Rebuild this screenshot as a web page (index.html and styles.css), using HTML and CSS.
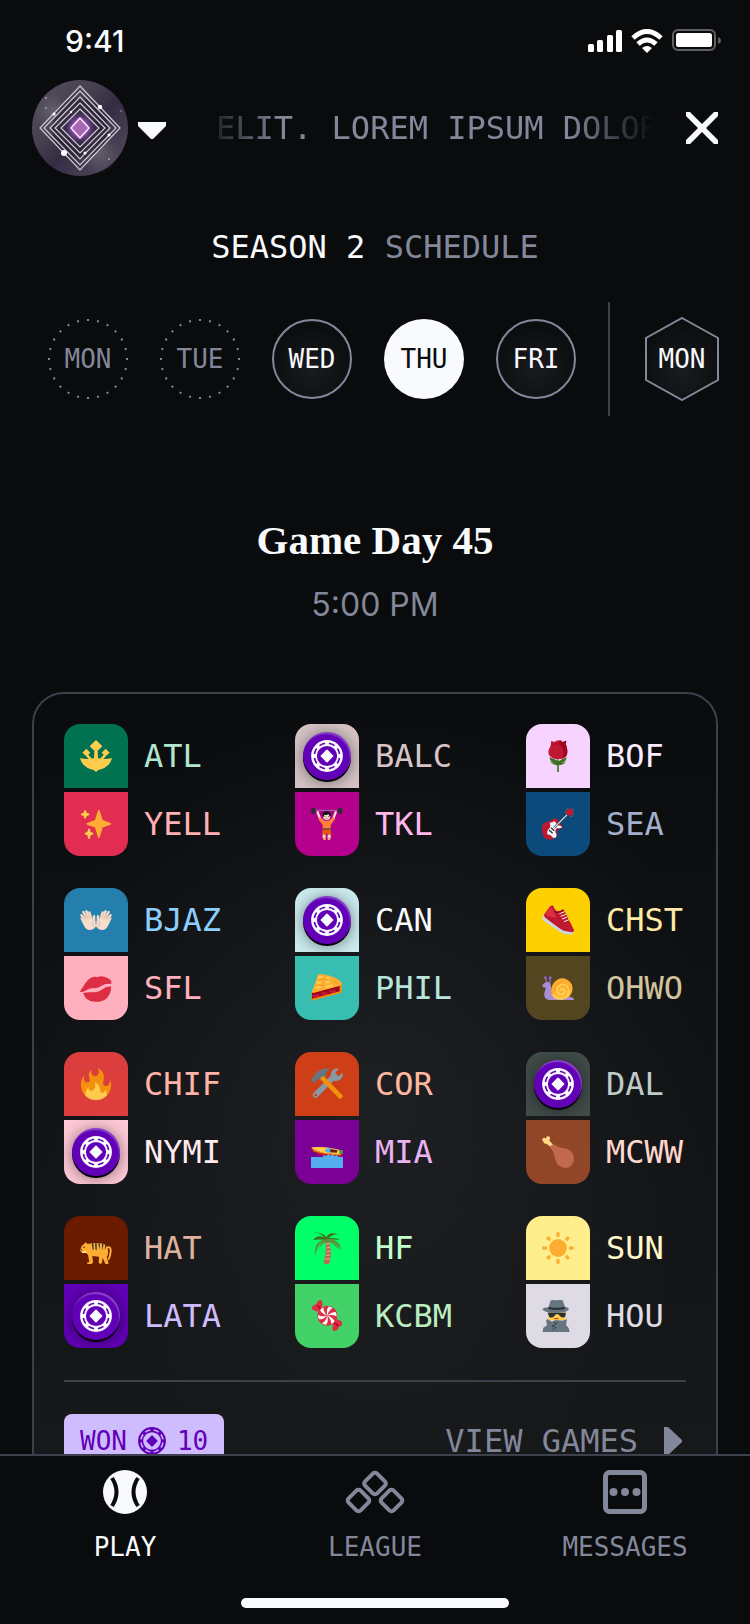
FILE: index.html
```html
<!DOCTYPE html>
<html lang="en">
<head>
<meta charset="utf-8">
<meta name="viewport" content="width=device-width, initial-scale=1">
<title>Season 2 Schedule</title>
<link rel="stylesheet" href="styles.css">
</head>
<body>
<svg class="sprite" aria-hidden="true">
  <defs>
    <symbol id="chip" viewBox="0 0 32 32">
      <g fill="none" stroke="currentColor">
        <circle cx="16" cy="16" r="14.7" stroke-width="2.4"/>
        <circle cx="16" cy="16" r="12.6" stroke-width="3" pathLength="80" stroke-dasharray="4 6" stroke-dashoffset="2"/>
        <circle cx="16" cy="16" r="11" stroke-width="1.8"/>
      </g>
      <path d="M16 10.4 21.6 16 16 21.6 10.4 16z" fill="currentColor" stroke="currentColor" stroke-width="1.6" stroke-linejoin="round"/>
    </symbol>
    <symbol id="trident" viewBox="0 0 96 96">
      <g fill="#ffcc4d">
        <path d="M48 0 67 19 53 32 54 56H42L43 32 29 19z"/>
        <path d="M19 26 31 38 25 44 37 58 31 62 18 48 7 38z"/>
        <path d="M77 26 65 38 71 44 59 58 65 62 78 48 89 38z"/>
        <path d="M0 54Q12 57 25 57 34 57 41 55H55Q62 57 71 57 84 57 96 54 91 75 73 84 62 89 55 90L48 96 41 90Q33 89 23 84 5 75 0 54z"/>
      </g>
    </symbol>
    <symbol id="sparkles" viewBox="0 0 36 36">
      <path fill="#ffac33" d="M34.347 16.893l-8.899-3.294-3.323-10.891c-.128-.42-.517-.708-.956-.708-.439 0-.828.288-.956.708l-3.322 10.891-8.9 3.294c-.393.146-.653.519-.653.938 0 .418.26.793.653.938l8.895 3.293 3.324 11.223c.126.424.516.715.959.715.442 0 .833-.291.959-.716l3.324-11.223 8.896-3.293c.391-.144.652-.518.652-.937 0-.418-.261-.792-.653-.938z"/>
      <path fill="#ffcc4d" d="M14.347 27.894l-2.314-.856-.9-3.3c-.118-.436-.513-.738-.964-.738-.451 0-.846.302-.965.737l-.9 3.3-2.313.856c-.393.146-.653.52-.653.938 0 .418.26.793.653.938l2.301.853.907 3.622c.112.444.511.756.97.756.459 0 .858-.312.97-.757l.907-3.622 2.301-.853c.393-.144.653-.519.653-.937 0-.418-.26-.793-.653-.937zM10.009 6.231l-2.364-.875-.876-2.365c-.145-.393-.519-.653-.938-.653-.418 0-.792.26-.938.653l-.875 2.365-2.365.875c-.393.146-.653.52-.653.938 0 .418.26.793.653.938l2.365.875.875 2.365c.146.393.52.653.938.653.418 0 .792-.26.938-.653l.875-2.365 2.365-.875c.393-.146.653-.52.653-.938 0-.418-.26-.792-.653-.938z"/>
    </symbol>
    <symbol id="lifter" viewBox="0 0 96 96">
      <path d="M10 7H86" stroke="#99aab5" stroke-width="2"/>
      <g fill="#292f33"><path d="M2 0H12V18H2zM82 0H92V18H82z"/><path d="M0 5H15V11H0zM79 5H95V11H79z"/></g>
      <path d="M19 10 27 32 39 43M75 10 67 32 55 43" fill="none" stroke="#f7dece" stroke-width="7"/>
      <path d="M27 27 38 38H56L67 27 72 33 59 51V65H35V51L22 33z" fill="#ff8136"/>
      <path d="M35 64H59L61 81H50L47 73 44 81H33z" fill="#e35b0c"/>
      <path d="M35 61H59V65H35z" fill="#66453c"/>
      <path d="M35 80H44V90H35zM50 80H59V90H50z" fill="#f7dece"/>
      <path d="M34 87H44V96H38zM50 87H60L57 96H50z" fill="#ffac7a"/>
      <circle cx="47" cy="25" r="11" fill="#f7dece"/>
      <path d="M34 24Q33 10 47 9 61 10 60 24L56 26 53 19Q44 23 40 20L38 27z" fill="#141517"/>
      <path d="M42 24V28M52 24V28" stroke="#662113" stroke-width="2"/>
      <path d="M43 32H51" stroke="#c1694f" stroke-width="2"/>
    </symbol>
    <symbol id="rose" viewBox="0 0 96 96">
      <path d="M48 60V95" stroke="#3e721d" stroke-width="5" stroke-linecap="round"/>
      <path d="M22 52Q40 57 48 65 58 57 75 52 70 68 57 70 70 67 72 62 67 76 48 76 30 75 24 63 31 69 40 70 25 67 22 52z" fill="#3e721d"/>
      <path d="M27 3Q34 4 37 6 44-1 55 1L61 6Q66 4 73 2 70 10 74 21 80 43 70 51 60 58 47 58 29 57 21 44 16 32 24 22 28 13 27 3z" fill="#be1931"/>
      <path d="M55 1 61 6Q66 4 73 2 70 10 74 21 80 43 70 51 63 56 56 57 67 48 65 33 61 17 50 12 53 6 55 1z" fill="#a0041e"/>
      <path d="M29 18Q39 8 50 12 63 20 65 34" fill="none" stroke="#a0041e" stroke-width="2"/>
    </symbol>
    <symbol id="guitar" viewBox="0 0 96 96">
      <path d="M73 5 79 1M90 2 95 6M84 25 92 24M70 11V15M94 16 95 20" stroke="#66757f" stroke-width="3"/>
      <path d="M76 4 86 1 94 10 92 20 84 24 73 19 71 10z" fill="#be1931"/>
      <path d="M2 50Q12 40 26 40 30 29 43 32 50 34 50 45 58 48 62 57 58 65 49 64 42 65 46 78 45 91 27 95 12 95 5 86-4 65 2 50z" fill="#be1931"/>
      <path d="M23 44Q33 44 37 39 44 45 45 52 54 51 61 57 53 62 47 60 40 61 40 72 46 80 42 88 35 92 30 86 24 78 17 80 13 71 20 63 28 58 23 44z" fill="#f5f8fa"/>
      <path d="M36 60 75 20" stroke="#292f33" stroke-width="7"/>
      <path d="M36 60 75 20" stroke="#ccd6dd" stroke-width="4"/>
      <path d="M27 59 37 68M21 66 32 76" stroke="#292f33" stroke-width="4"/>
    </symbol>
    <symbol id="hands" viewBox="0 0 96 96">
      <g id="hand">
        <path d="M20 52 4 34M24 48 10 24M30 47 19 22M35 48 28 25" stroke="#f7dece" stroke-width="7" stroke-linecap="round"/>
        <path d="M1 43Q3 37 10 44L22 52 35 43 38 50Q37 35 41 32 47 32 46 47L48 67Q42 78 29 78 17 77 12 65z" fill="#f7dece"/>
        <path d="M8 28 20 47M15 24 25 46M24 26 31 45M6 39 16 50M42 70Q34 59 38 50" fill="none" stroke="#e0aa94" stroke-width="2"/>
      </g>
      <use href="#hand" transform="matrix(-1 0 0 1 96 0)"/>
    </symbol>
    <symbol id="lips" viewBox="0 0 96 96">
      <g fill="#dd2e44">
        <path d="M0 59Q4 50 10 43 25 18 39 15 47 13 52 16 62 10 72 14 88 18 94 27V36Q75 34 64 42 55 50 40 48 25 50 15 57 6 61 0 59z"/>
        <path d="M9 63Q22 60 34 61 54 61 65 53 76 44 93 43 95 64 79 80 65 91 42 89 18 88 9 63z"/>
      </g>
    </symbol>
    <symbol id="pie" viewBox="0 0 96 96">
      <path d="M2 59 92 32V62L2 86z" fill="#f4900c"/>
      <path d="M3 62 86 41V58L3 80z" fill="#a0041e"/>
      <path d="M2 60Q13 32 21 8 25 4 35 7 76 13 91 31 95 38 84 42L7 63z" fill="#ffac33"/>
      <path d="M22 16 35 14M45 17 57 18M17 33 31 30M43 31 67 28M14 48 30 44M43 46 66 40" stroke="#ffcc4d" stroke-width="7"/>
      <path d="M26 22H45M54 27 76 31M23 40 41 41" stroke="#f4900c" stroke-width="2"/>
      <path d="M8 72H22M34 65H46M59 58H71" stroke="#dd2e44" stroke-width="9" stroke-linecap="round" opacity=".55"/>
    </symbol>
    <symbol id="shoe" viewBox="0 0 96 96">
      <path d="M1 35 6 33 80 80 95 83Q95 90 84 90 66 89 53 80L9 51Q0 43 1 35z" fill="#ccd6dd"/>
      <path d="M6 32 25 6 33 4Q36 17 45 22 55 22 65 16L96 78Q96 87 85 85 67 84 54 75L8 40z" fill="#be1931"/>
      <path d="M9 28 25 6 35 20 44 42 18 37z" fill="#dd2e44"/>
      <path d="M3 44 54 79Q68 88 88 88" fill="none" stroke="#ccd6dd" stroke-width="8"/>
      <path d="M52 29 68 23M56 37 72 31M60 45 76 39M66 53 81 47" stroke="#f5f8fa" stroke-width="3"/>
      <path d="M37 22Q49 30 63 18" fill="none" stroke="#a0041e" stroke-width="4"/>
    </symbol>
    <symbol id="snail" viewBox="0 0 96 96">
      <path d="M14 34 11 17M23 34 25 17" stroke="#9266cc" stroke-width="4"/>
      <circle cx="10" cy="17" r="4" fill="#9266cc"/><circle cx="25" cy="17" r="4" fill="#9266cc"/>
      <path d="M4 46Q-1 42 3 37 12 28 22 31 30 38 27 56 28 73 42 75L77 74Q94 73 96 82V84H20Q10 82 7 72 5 64 12 48z" fill="#aa8dd8"/>
      <path d="M27 58Q28 31 51 20 75 15 89 37 97 58 82 74 75 80 65 80H42Q27 74 27 58z" fill="#ffac33"/>
      <path d="M34 67Q42 82 62 79 82 73 81 53 77 34 59 36 44 42 45 57 50 72 64 66 72 57 63 51 56 50 56 57" fill="none" stroke="#ffcc4d" stroke-width="8"/>
      <path d="M38 57Q39 38 58 33 80 33 85 53" fill="none" stroke="#f4900c" stroke-width="2"/>
    </symbol>
    <symbol id="fire" viewBox="0 0 36 36">
      <path fill="#f4900c" d="M35 19c0-2.062-.367-4.039-1.04-5.868-.46 5.389-3.333 8.157-6.335 6.868-2.812-1.208-.917-5.917-.777-8.164.236-3.809-.012-8.169-6.931-11.794 2.875 5.5.333 8.917-2.333 9.125-2.958.231-5.667-2.542-4.667-7.042-3.238 2.386-3.332 6.402-2.333 9 1.042 2.708-.042 4.958-2.583 5.208-2.84.28-4.418-3.041-2.963-8.333C2.52 10.965 1 14.805 1 19c0 9.389 7.611 17 17 17s17-7.611 17-17z"/>
      <path fill="#ffcc4d" d="M28.394 23.999c.148 3.084-2.561 4.293-4.019 3.709-2.106-.843-1.541-2.291-2.083-5.291s-2.625-5.083-5.708-6c2.25 6.333-1.247 8.667-3.08 9.084-1.872.426-3.753-.001-3.968-4.007C7.352 23.668 6 26.676 6 30c0 .368.023.73.055 1.09C9.125 34.124 13.342 36 18 36s8.875-1.876 11.945-4.91c.032-.36.055-.722.055-1.09 0-2.187-.584-4.236-1.606-6.001z"/>
    </symbol>
    <symbol id="tools" viewBox="0 0 96 96">
      <path d="M14 81 70 24" stroke="#8899a6" stroke-width="17" stroke-linecap="round"/>
      <path d="M60 24Q58 5 79 0L81 5 73 14 75 23 83 24 92 16 96 18Q95 38 73 39L60 37z" fill="#8899a6"/>
      <circle cx="14" cy="81" r="4" fill="#cf3f17"/>
      <path d="M0 38Q2 29 9 24L17 13Q33-2 57 2 48 8 44 16L46 23 31 39Q25 30 19 34L11 45z" fill="#66757f"/>
      <path d="M36 32 88 85" stroke="#f4900c" stroke-width="14" stroke-linecap="round"/>
      <path d="M29 33 37 24 45 31 36 41z" fill="#f4900c"/>
    </symbol>
    <symbol id="boat" viewBox="0 0 96 96">
      <path d="M2 34Q30 31 54 35 82 39 95 44L93 62H45Q19 57 2 43z" fill="#be1931"/>
      <path d="M2 34Q30 31 54 35 82 39 95 44L91 53Q50 56 25 47 10 43 2 37z" fill="#ffcc4d"/>
      <path d="M6 43Q38 55 90 56" fill="none" stroke="#f4900c" stroke-width="3"/>
      <path d="M43 40 55 36H61L57 50 43 48z" fill="#55acee"/>
      <path d="M59 39 80 43 77 50 57 49z" fill="#662113"/>
      <path d="M84 42H95V54H86z" fill="#5c913b"/>
      <path d="M0 63H35L39 56 45 61 52 53 58 60 65 54 71 61 78 56 82 63H96V96H0z" fill="#55acee"/>
    </symbol>
    <symbol id="drumstick" viewBox="0 0 96 96">
      <path d="M4 17Q-3 10 4 6 8 4 12 8 12-1 20 1 27 4 22 14L35 27 28 34 13 23Q6 25 4 17z" fill="#ffd983"/>
      <path d="M25 34Q26 26 35 25 43 32 57 36 83 34 94 56 101 79 83 93 63 101 46 85 39 73 37 58 33 44 25 34z" fill="#c1694f"/>
    </symbol>
    <symbol id="tiger" viewBox="0 0 96 96">
      <path d="M76 49Q93 39 92 57 91 73 85 83" fill="none" stroke="#ffac33" stroke-width="6"/>
      <path d="M0 55 5 42 13 35 17 31 23 36Q40 32 61 34 79 35 83 50 87 67 80 75L85 91V96H76L68 77 66 93 61 96 56 92 57 74 37 72 39 92 34 96H22L21 92 28 90 24 69 17 61 6 63z" fill="#ffac33"/>
      <path d="M35 34H40L41 53H38zM45 34H50V54H47zM55 34H60L58 54zM66 35H71L66 56zM76 39H81L74 54z" fill="#292f33"/>
      <path d="M1 50 6 51 4 58zM10 44H14V48H10z" fill="#292f33"/>
      <path d="M6 60 17 57 21 63H9z" fill="#ffe8b6"/>
    </symbol>
    <symbol id="palm" viewBox="0 0 96 96">
      <path d="M43 26 51 24Q65 52 56 92 50 99 38 94 48 57 43 26z" fill="#c1694f"/>
      <path d="M46 37 55 34M47 48 57 45M47 59 58 57M45 70 58 69M43 81 57 81" stroke="#e6aaa0" stroke-width="3"/>
      <path d="M6 24Q19 6 39 16 24 0 8 3 34-1 46 16 55-3 82 7 65 6 53 19 76 16 88 24 60 20 47 27 35 20 6 24z" fill="#3e721d"/>
      <path d="M12 72Q8 27 43 22 20 35 12 72zM25 48Q30 25 49 20 87 21 90 53 77 30 60 29 84 37 84 54 67 31 48 30 33 31 20 58z" fill="#5c913b"/>
    </symbol>
    <symbol id="candy" viewBox="0 0 96 96">
      <path d="M3 20Q11 12 17 12 18 1 30 0 36 3 33 24L25 34Q8 34 3 26z" fill="#dd2e44"/>
      <path d="M65 66 73 58Q88 58 94 69L91 77 84 80Q81 93 68 93 62 89 65 77z" fill="#dd2e44"/>
      <path d="M20 16 36 37M64 63 82 78" stroke="#a0041e" stroke-width="4"/>
      <circle cx="49" cy="47" r="30" fill="#dd2e44"/>
      <g fill="#fff">
        <path id="swirl" d="M49 47Q45 32 52 20 60 20 65 24 52 32 49 47z"/>
        <use href="#swirl" transform="rotate(60 49 47)"/><use href="#swirl" transform="rotate(120 49 47)"/>
        <use href="#swirl" transform="rotate(180 49 47)"/><use href="#swirl" transform="rotate(240 49 47)"/>
        <use href="#swirl" transform="rotate(300 49 47)"/>
      </g>
    </symbol>
    <symbol id="sun" viewBox="0 0 36 36">
      <circle cx="18" cy="18" r="10" fill="#ffac33"/>
      <path d="M18 2V4M18 32V34M2 18H4M32 18H34M7 7 8 8M28 28 29 29M29 7 28 8M8 28 7 29" stroke="#ffac33" stroke-width="4" stroke-linecap="round"/>
    </symbol>
    <symbol id="spy" viewBox="0 0 96 96">
      <path d="M19 33H71V61H19z" fill="#ffcc4d"/>
      <path d="M2 96 4 83 15 76 12 60 17 58 30 65 41 60 61 62 75 58 72 75 80 84 83 96z" fill="#66757f"/>
      <path d="M34 65 42 72 30 78 42 82 31 90M49 65 41 72" fill="none" stroke="#292f33" stroke-width="2"/>
      <path d="M17 38H72L69 51Q58 56 49 43H41Q34 57 22 51z" fill="#292f33"/>
      <path d="M37 56H49" stroke="#be1931" stroke-width="3"/>
      <path d="M1 28Q4 22 20 22L25 2Q31-1 40 1 53-1 62 1L69 21Q80 22 81 28 76 39 41 39 7 39 1 28z" fill="#66757f"/>
      <path d="M20 20Q40 27 69 20L68 27Q45 33 19 27z" fill="#292f33"/>
    </symbol>
  </defs>
</svg>

<div class="status">
  <time class="status-time">9:41</time>
  <div class="status-icons">
    <svg width="34" height="24" viewBox="0 0 34 24" fill="#fff" aria-hidden="true">
      <rect x="0" y="15" width="6" height="8" rx="1.5"/><rect x="9" y="11" width="6" height="12" rx="1.5"/><rect x="19" y="6" width="6" height="17" rx="1.5"/><rect x="28" y="1" width="6" height="22" rx="1.5"/>
    </svg>
    <svg width="32" height="24" viewBox="0 0 32 24" fill="none" stroke="#fff" stroke-width="5" aria-hidden="true">
      <path d="M2 9Q16-4 30 9M7 15Q16 7 25 15"/><path d="M11 19Q16 15 21 19L16 24z" fill="#fff" stroke="none"/>
    </svg>
    <svg width="50" height="24" viewBox="0 0 50 24" aria-hidden="true">
      <rect x="1" y="1" width="42" height="20" rx="5" fill="none" stroke="#606163" stroke-width="2"/>
      <rect x="4" y="4" width="36" height="14" rx="2.5" fill="#fff"/>
      <path d="M46 8Q49 9 49 12 49 14 46 15z" fill="#606163"/>
    </svg>
  </div>
</div>

<header class="header">
  <button class="profile" type="button" aria-label="Switch league">
    <svg class="avatar" viewBox="0 0 96 96" aria-hidden="true">
      <defs>
        <radialGradient id="core"><stop offset="0" stop-color="#d48bdb"/><stop offset=".45" stop-color="#7d4a9c"/><stop offset="1" stop-color="#30263f" stop-opacity="0"/></radialGradient>
        <linearGradient id="space" x1="0" y1="0" x2="1" y2="1"><stop offset="0" stop-color="#56505e"/><stop offset=".35" stop-color="#464050"/><stop offset=".55" stop-color="#352d44"/><stop offset="1" stop-color="#574f62"/></linearGradient>
        <radialGradient id="cloud"><stop offset="0" stop-color="#77737d" stop-opacity=".6"/><stop offset="1" stop-color="#77737d" stop-opacity="0"/></radialGradient>
      </defs>
      <circle cx="48" cy="48" r="48" fill="url(#space)"/>
      <circle cx="21" cy="32" r="18" fill="url(#cloud)"/><circle cx="67" cy="73" r="20" fill="url(#cloud)"/>
      <ellipse cx="48" cy="48" rx="28" ry="30" fill="#241d2e" opacity=".6"/>
      <circle cx="48" cy="48" r="19" fill="url(#core)"/>
      <g fill="none" stroke="#d0ced4" stroke-width="1.2">
        <path d="M48 6 88 48 48 90 8 48z"/><path d="M48 11 84 48 48 85 12 48z"/><path d="M48 17 78 48 48 79 18 48z"/><path d="M48 23 73 48 48 73 23 48z"/><path d="M48 29 67 48 48 67 29 48z"/>
      </g>
      <path d="M48 38 57 48 48 58 39 48z" fill="#a866b3" stroke="#fbe3ff" stroke-width="1.6" stroke-linejoin="round"/>
      <g fill="#fff"><circle cx="68" cy="27" r="2.2"/><circle cx="32" cy="73" r="3"/><circle cx="22" cy="34" r="1.6"/><circle cx="77" cy="55" r="1.5"/><circle cx="53" cy="73" r="1.5"/><circle cx="39" cy="32" r="1.2"/></g>
      <g fill="#aaa8b2"><circle cx="14" cy="18" r="1"/><circle cx="14" cy="28" r="1"/><circle cx="77" cy="79" r="1"/><circle cx="89" cy="31" r=".8"/></g>
    </svg>
    <svg width="32" height="32" viewBox="0 0 32 32" aria-hidden="true"><path d="M2 10H30V14L17 27H15L2 14z" fill="#f9fafc"/></svg>
  </button>
  <p class="ticker">ELIT. LOREM IPSUM DOLOR</p>
  <button class="close" type="button" aria-label="Close">
    <svg width="32" height="32" viewBox="0 0 32 32" aria-hidden="true"><path d="M0 0H4L16 12 28 0H32V4L20 16 32 28V32H28L16 20 4 32H0V28L12 16 0 4z" fill="#f9fafc"/></svg>
  </button>
</header>

<main class="content">
  <h1 class="title">SEASON 2 <span>SCHEDULE</span></h1>

  <div class="days" role="group" aria-label="Days">
    <button class="day past" type="button"><svg viewBox="0 0 80 80" aria-hidden="true"><circle cx="40" cy="40" r="39" pathLength="240" stroke-dasharray="2 8" stroke-dashoffset="1"/></svg><span>MON</span></button>
    <button class="day past" type="button"><svg viewBox="0 0 80 80" aria-hidden="true"><circle cx="40" cy="40" r="39" pathLength="240" stroke-dasharray="2 8" stroke-dashoffset="1"/></svg><span>TUE</span></button>
    <button class="day ring" type="button"><span>WED</span></button>
    <button class="day current" type="button" aria-pressed="true"><span>THU</span></button>
    <button class="day ring" type="button"><span>FRI</span></button>
    <div class="days-rule"></div>
    <button class="day hex" type="button"><svg viewBox="0 0 80 84" aria-hidden="true"><defs><radialGradient id="hexglow" cx=".5" cy=".65" r=".6"><stop offset="0" stop-color="#1a1b1e"/><stop offset="1" stop-color="#0c0d0f"/></radialGradient></defs><path d="M40 1 76 21V63L40 83 4 63V21z" fill="url(#hexglow)"/></svg><span>MON</span></button>
  </div>

  <h2 class="gameday">Game Day 45</h2>
  <p class="start">5:00 PM</p>

  <section class="card" aria-label="Games">
    <div class="games">
      <div class="game">
        <div class="team atl"><span class="tile"><svg><use href="#trident"/></svg></span>ATL</div>
        <div class="team yell"><span class="tile"><svg><use href="#sparkles"/></svg></span>YELL</div>
      </div>
      <div class="game">
        <div class="team balc"><span class="tile"><span class="token"><svg><use href="#chip"/></svg></span></span>BALC</div>
        <div class="team tkl"><span class="tile"><svg><use href="#lifter"/></svg></span>TKL</div>
      </div>
      <div class="game">
        <div class="team bof"><span class="tile"><svg><use href="#rose"/></svg></span>BOF</div>
        <div class="team sea"><span class="tile"><svg><use href="#guitar"/></svg></span>SEA</div>
      </div>
      <div class="game">
        <div class="team bjaz"><span class="tile"><svg><use href="#hands"/></svg></span>BJAZ</div>
        <div class="team sfl"><span class="tile"><svg><use href="#lips"/></svg></span>SFL</div>
      </div>
      <div class="game">
        <div class="team can"><span class="tile"><span class="token"><svg><use href="#chip"/></svg></span></span>CAN</div>
        <div class="team phil"><span class="tile"><svg><use href="#pie"/></svg></span>PHIL</div>
      </div>
      <div class="game">
        <div class="team chst"><span class="tile"><svg><use href="#shoe"/></svg></span>CHST</div>
        <div class="team ohwo"><span class="tile"><svg><use href="#snail"/></svg></span>OHWO</div>
      </div>
      <div class="game">
        <div class="team chif"><span class="tile"><svg><use href="#fire"/></svg></span>CHIF</div>
        <div class="team nymi"><span class="tile"><span class="token"><svg><use href="#chip"/></svg></span></span>NYMI</div>
      </div>
      <div class="game">
        <div class="team cor"><span class="tile"><svg><use href="#tools"/></svg></span>COR</div>
        <div class="team mia"><span class="tile"><svg><use href="#boat"/></svg></span>MIA</div>
      </div>
      <div class="game">
        <div class="team dal"><span class="tile"><span class="token"><svg><use href="#chip"/></svg></span></span>DAL</div>
        <div class="team mcww"><span class="tile"><svg><use href="#drumstick"/></svg></span>MCWW</div>
      </div>
      <div class="game">
        <div class="team hat"><span class="tile"><svg><use href="#tiger"/></svg></span>HAT</div>
        <div class="team lata"><span class="tile"><span class="token"><svg><use href="#chip"/></svg></span></span>LATA</div>
      </div>
      <div class="game">
        <div class="team hf"><span class="tile"><svg><use href="#palm"/></svg></span>HF</div>
        <div class="team kcbm"><span class="tile"><svg><use href="#candy"/></svg></span>KCBM</div>
      </div>
      <div class="game">
        <div class="team sunb"><span class="tile"><svg><use href="#sun"/></svg></span>SUN</div>
        <div class="team hou"><span class="tile"><svg><use href="#spy"/></svg></span>HOU</div>
      </div>
    </div>
    <div class="card-foot">
      <div class="won"><span>WON</span><svg width="28" height="28" aria-hidden="true"><use href="#chip"/></svg><span>10</span></div>
      <a class="view" href="#games">VIEW GAMES<svg width="32" height="32" viewBox="0 0 32 32" aria-hidden="true"><path d="M10 2H14L28 15V17L14 30H10z" fill="currentColor"/></svg></a>
    </div>
  </section>
</main>

<nav class="tabs" aria-label="Main">
  <a class="tab active" href="#play">
    <svg width="44" height="44" viewBox="0 0 44 44" aria-hidden="true"><circle cx="22" cy="22" r="22" fill="#f9fafc"/><path d="M9 8Q18 22 9 36M35 8Q26 22 35 36" fill="none" stroke="#0a0b0d" stroke-width="4"/></svg>
    PLAY
  </a>
  <a class="tab" href="#league">
    <svg width="60" height="44" viewBox="0 0 60 44" fill="none" stroke="currentColor" stroke-width="4" stroke-linejoin="round" aria-hidden="true"><rect x="21.5" y="5" width="17" height="17" rx="3" transform="rotate(45 30 13.5)"/><rect x="5" y="22" width="17" height="17" rx="3" transform="rotate(45 13.5 30.5)"/><rect x="38" y="22" width="17" height="17" rx="3" transform="rotate(45 46.5 30.5)"/></svg>
    LEAGUE
  </a>
  <a class="tab" href="#messages">
    <svg width="44" height="44" viewBox="0 0 44 44" aria-hidden="true"><rect x="2.500" y="2.500" width="39" height="39" rx="4" fill="none" stroke="currentColor" stroke-width="5"/><g fill="currentColor"><circle cx="10.500" cy="22" r="4"/><circle cx="22" cy="22" r="4"/><circle cx="33.500" cy="22" r="4"/></g></svg>
    MESSAGES
  </a>
  <div class="home-bar"></div>
</nav>
</body>
</html>
```

FILE: styles.css
```css
:root {
  --bg: #0a0b0d;
  --white: #f9fafc;
  --muted: #83879a;
  --line: #3d404c;
  --purple: #6200b8;
  --mono: "DejaVu Sans Mono", "Liberation Mono", monospace;
}

* {
  box-sizing: border-box;
}

body {
  margin: 0;
  height: 100vh;
  display: flex;
  flex-direction: column;
  background: var(--bg);
  color: var(--white);
  font: 32px/40px var(--mono);
  overflow: hidden;
}

h1, h2, p {
  margin: 0;
  font-weight: 400;
}

button {
  padding: 0;
  border: 0;
  background: none;
  color: inherit;
  font: inherit;
  cursor: pointer;
}

a {
  color: inherit;
  text-decoration: none;
}

svg {
  display: block;
  flex: none;
}

.sprite {
  position: absolute;
  width: 0;
  height: 0;
}

.status {
  flex: none;
  height: 80px;
  padding: 2px 28px 0 65px;
  display: flex;
  align-items: center;
  justify-content: space-between;
}

.status-time {
  font: 500 30px/40px Inter, sans-serif;
}

.status-icons {
  display: flex;
  gap: 9px;
}

.header {
  flex: none;
  display: flex;
  align-items: center;
  padding: 0 32px;
}

.profile {
  display: flex;
  align-items: center;
  gap: 8px;
}

.avatar {
  width: 96px;
  height: 96px;
}

.ticker {
  flex: 1;
  min-width: 0;
  margin: 0 32px 0 48px;
  overflow: hidden;
  white-space: nowrap;
  color: var(--muted);
  -webkit-mask-image: linear-gradient(90deg, rgba(0, 0, 0, .2), #000 64px, #000 calc(100% - 84px), transparent);
  mask-image: linear-gradient(90deg, rgba(0, 0, 0, .2), #000 64px, #000 calc(100% - 84px), transparent);
}

.content {
  flex: 1;
  min-height: 0;
  overflow: hidden;
  padding-top: 51px;
}

.title {
  font-size: 32px;
  text-align: center;
}

.title span {
  color: var(--muted);
}

.days {
  display: flex;
  align-items: center;
  gap: 32px;
  margin-top: 35px;
  padding-left: 48px;
}

.days-rule {
  flex: none;
  width: 2px;
  height: 114px;
  background: var(--line);
}

.day {
  flex: none;
  display: grid;
  place-items: center;
  width: 80px;
  height: 80px;
  border-radius: 50%;
  font-size: 26px;
}

.day > * {
  grid-area: 1 / 1;
}

.day svg {
  width: 80px;
  fill: none;
  stroke: var(--muted);
  stroke-width: 2px;
}

.past {
  color: var(--muted);
}

.ring {
  border: 2px solid var(--muted);
  background: radial-gradient(circle at 50% 65%, #1a1b1e, #0c0d0f 70%);
}

.current {
  background: var(--white);
  color: var(--bg);
}

.hex {
  height: 84px;
  border-radius: 0;
}

.gameday {
  margin-top: 96px;
  text-align: center;
  font: 700 41px/56px "Liberation Serif", serif;
}

.start {
  margin-top: 17px;
  text-align: center;
  color: var(--muted);
  font: 400 32px/40px Inter, sans-serif;
}

.card {
  margin: 67px 32px 32px;
  padding: 30px;
  border: 2px solid var(--line);
  border-radius: 32px;
  background:
    radial-gradient(ellipse at 50% 50%, rgba(40, 43, 48, .5), transparent 70%),
    linear-gradient(#0a0b0d, #121315 50%, #18191a);
}

.games {
  display: grid;
  grid-template-columns: repeat(3, 160px);
  justify-content: space-between;
  row-gap: 32px;
}

.game {
  display: grid;
  gap: 4px;
}

.team {
  display: flex;
  align-items: center;
  gap: 16px;
}

.tile {
  flex: none;
  display: grid;
  place-items: center;
  width: 64px;
  height: 64px;
  overflow: hidden;
}

.team:first-child .tile {
  border-radius: 16px 16px 0 0;
}

.team:last-child .tile {
  border-radius: 0 0 16px 16px;
}

.tile svg {
  width: 32px;
  height: 32px;
}

.token {
  display: grid;
  place-items: center;
  width: 48px;
  height: 48px;
  border-radius: 50%;
  background: var(--purple);
  color: var(--white);
  box-shadow: inset -1px 2px 1px rgba(255, 255, 255, .25), 0 2px 0 #050008, 0 2px 16px rgba(0, 0, 0, .5);
}

.atl { color: #b0e6d0; }
.atl .tile { background: #007250; }
.yell { color: #ffb0b4; }
.yell .tile { background: #e22d52; }
.balc { color: #d6c4c6; }
.balc .tile { background: #d6c4c6; }
.tkl { color: #ffb8ec; }
.tkl .tile { background: #b4008c; }
.bof { color: #fbedff; }
.bof .tile { background: #f7d4ff; }
.sea { color: #a2b0cc; }
.sea .tile { background: #0c4a7b; }
.bjaz { color: #8ccfff; }
.bjaz .tile { background: #257fac; }
.sfl { color: #ffb0bf; }
.sfl .tile { background: #ffb0bf; }
.can { color: var(--white); }
.can .tile { background: #ccecf0; }
.phil { color: #b7e5dc; }
.phil .tile { background: #38bdb1; }
.chst { color: #ffeaa4; }
.chst .tile { background: #ffd000; }
.ohwo { color: #d1c39f; }
.ohwo .tile { background: #524520; }
.chif { color: #ffb2a5; }
.chif .tile { background: #dc3d3d; }
.nymi { color: #ffeaed; }
.nymi .tile { background: #ffc9d7; }
.cor { color: #ffb7a0; }
.cor .tile { background: #cf3f17; }
.mia { color: #e9b3f0; }
.mia .tile { background: #7a0096; }
.dal { color: #becbc9; }
.dal .tile { background: #414c49; }
.mcww { color: #ffd7ce; }
.mcww .tile { background: #924628; }
.hat { color: #deb0a0; }
.hat .tile { background: #6b1b00; }
.lata { color: #cfbcff; }
.lata .tile { background: #6200b8; }
.hf { color: #c3ffcb; }
.hf .tile { background: #00ff68; }
.kcbm { color: #baedc0; }
.kcbm .tile { background: #42d268; }
.sunb { color: #fff6ca; }
.sunb .tile { background: #ffef8c; }
.hou { color: #dedbe5; }
.hou .tile { background: #dedbe5; }

.card-foot {
  display: flex;
  align-items: center;
  justify-content: space-between;
  margin-top: 32px;
  padding-top: 32px;
  border-top: 2px solid var(--line);
}

.won {
  display: flex;
  align-items: center;
  gap: 11px;
  padding: 7px 16px;
  border-radius: 8px;
  background: #cfbcff;
  color: var(--purple);
  font-size: 26px;
}

.view {
  display: flex;
  align-items: center;
  gap: 16px;
  color: var(--muted);
}

.tabs {
  flex: none;
  display: grid;
  grid-template-columns: repeat(3, 1fr);
  padding: 14px 0 16px;
  border-top: 2px solid var(--line);
  background: var(--bg);
}

.tab {
  display: flex;
  flex-direction: column;
  align-items: center;
  gap: 13px;
  color: var(--muted);
  font-size: 26px;
}

.active {
  color: var(--white);
}

.home-bar {
  grid-column: 1 / -1;
  justify-self: center;
  width: 268px;
  height: 10px;
  margin-top: 31px;
  border-radius: 5px;
  background: var(--white);
}
```
